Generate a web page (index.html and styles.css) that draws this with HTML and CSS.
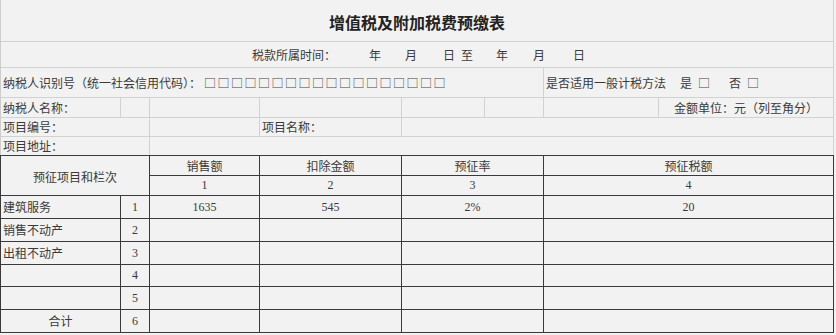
FILE: index.html
```html
<!DOCTYPE html>
<html lang="zh-CN">
<head>
<meta charset="utf-8">
<title>增值税及附加税费预缴表</title>
<link rel="stylesheet" href="styles.css">
</head>
<body>
<div class="sheet">
  <div class="top">
    <div class="c s8 title">增值税及附加税费预缴表</div>
    <div class="c s8 period"><span>税款所属时间：</span><span class="p1">年</span><span class="p2">月</span><span class="p3">日</span><span class="p4">至</span><span class="p5">年</span><span class="p6">月</span><span class="p7">日</span></div>
    <div class="c s6 left">纳税人识别号（统一社会信用代码）：<span class="boxes">□□□□□□□□□□□□□□□□□□</span></div>
    <div class="c s2 left">是否适用一般计税方法<span class="yes">是</span><span class="chk">□</span><span class="no">否</span><span class="chk">□</span></div>

    <div class="c left">纳税人名称：</div>
    <div class="c"></div>
    <div class="c"></div>
    <div class="c"></div>
    <div class="c"></div>
    <div class="c"></div>
    <div class="c"></div>
    <div class="c center">金额单位：元（列至角分）</div>

    <div class="c s2 left">项目编号：</div>
    <div class="c"></div>
    <div class="c left">项目名称：</div>
    <div class="c s4"></div>

    <div class="c s2 left nb">项目地址：</div>
    <div class="c s6 nb"></div>
  </div>

  <div class="bottom">
    <div class="d s2 r2 center hd-main">预征项目和栏次</div>
    <div class="d center hd">销售额</div>
    <div class="d center hd">扣除金额</div>
    <div class="d center hd">预征率</div>
    <div class="d center hd">预征税额</div>
    <div class="d center">1</div>
    <div class="d center">2</div>
    <div class="d center">3</div>
    <div class="d center">4</div>

    <div class="d left">建筑服务</div>
    <div class="d center">1</div>
    <div class="d center">1635</div>
    <div class="d center">545</div>
    <div class="d center">2%</div>
    <div class="d center">20</div>

    <div class="d left">销售不动产</div>
    <div class="d center">2</div>
    <div class="d"></div>
    <div class="d"></div>
    <div class="d"></div>
    <div class="d"></div>

    <div class="d left">出租不动产</div>
    <div class="d center">3</div>
    <div class="d"></div>
    <div class="d"></div>
    <div class="d"></div>
    <div class="d"></div>

    <div class="d"></div>
    <div class="d center">4</div>
    <div class="d"></div>
    <div class="d"></div>
    <div class="d"></div>
    <div class="d"></div>

    <div class="d"></div>
    <div class="d center">5</div>
    <div class="d"></div>
    <div class="d"></div>
    <div class="d"></div>
    <div class="d"></div>

    <div class="d center">合计</div>
    <div class="d center">6</div>
    <div class="d"></div>
    <div class="d"></div>
    <div class="d"></div>
    <div class="d"></div>
  </div>
</div>
</body>
</html>
```
FILE: styles.css
```css
* {
  box-sizing: border-box;
}

body {
  margin: 0;
  background: #f2f2f2;
  font-family: "Liberation Serif", "Noto Sans CJK SC", serif;
  font-size: 12px;
  color: #3a3a3a;
}

.sheet {
  width: 834px;
}

.top {
  display: grid;
  grid-template-columns: 120px 29px 110px 142px 83px 59px 115px 175px;
  grid-template-rows: 42px 26px 30px 20px 19px 18px;
  border-left: 1px solid #cdcdcd;
}

.c {
  display: flex;
  align-items: center;
  white-space: nowrap;
  overflow: hidden;
  min-width: 0;
  border-right: 1px solid #d2d2d2;
  border-bottom: 1px solid #d2d2d2;
}

.c.nb {
  border-bottom: none;
}

.s2 { grid-column: span 2; }
.s4 { grid-column: span 4; }
.s6 { grid-column: span 6; }
.s8 { grid-column: span 8; }
.r2 { grid-row: span 2; }

.left {
  justify-content: flex-start;
  padding-left: 2px;
}

.center {
  justify-content: center;
}

.title {
  justify-content: center;
  font-size: 16px;
  font-weight: bold;
  color: #222;
  padding-top: 3px;
}

.period {
  padding-left: 251px;
}

.p1 { margin-left: 33px; }
.p2 { margin-left: 24px; }
.p3 { margin-left: 26px; }
.p4 { margin-left: 6px; }
.p5 { margin-left: 23px; }
.p6 { margin-left: 25px; }
.p7 { margin-left: 28px; }

.boxes,
.chk {
  font-family: "Noto Sans CJK SC", sans-serif;
  color: #444;
}

.boxes {
  margin-left: 3px;
  letter-spacing: 1.5px;
}

.yes { margin-left: 14px; }
.chk { margin-left: 6px; }
.no { margin-left: 19px; }

.bottom {
  display: grid;
  grid-template-columns: 120px 29px 110px 142px 142px 290px;
  grid-template-rows: 20px 20px 23px 23px 23px 22px 23px 23px;
  border-top: 1px solid #3a3a3a;
  border-left: 1px solid #3a3a3a;
}

.d {
  display: flex;
  align-items: center;
  white-space: nowrap;
  overflow: hidden;
  min-width: 0;
  border-right: 1px solid #3a3a3a;
  border-bottom: 1px solid #3a3a3a;
}

.hd {
  padding-top: 1px;
}

.hd-main {
  padding-top: 2px;
}
```
